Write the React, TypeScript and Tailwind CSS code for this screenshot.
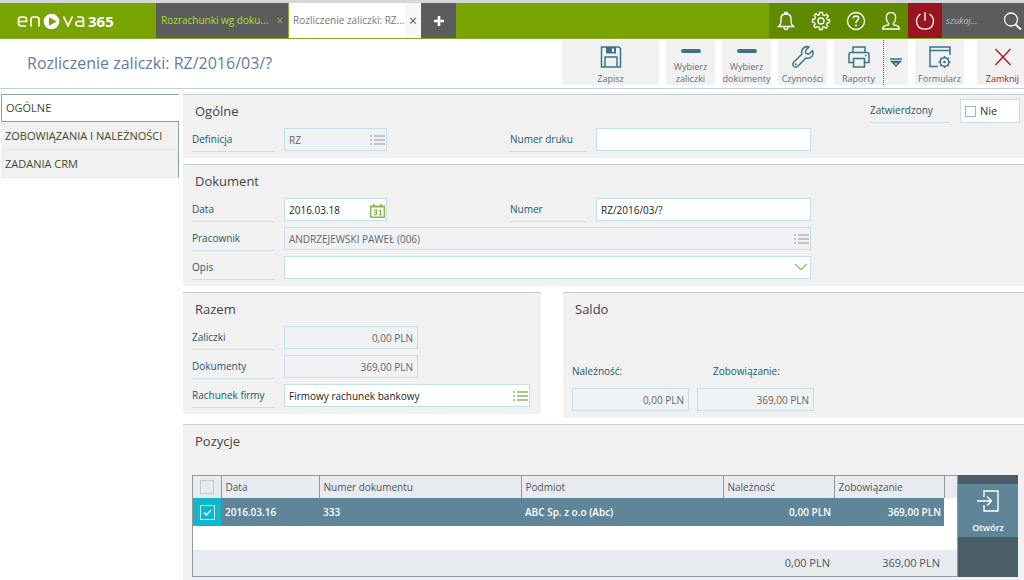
import React, { useState } from "react";

const INPUT_BASE =
  "block h-[23px] w-full min-w-0 border px-1 text-[10px] leading-4 outline-none";

function ListIcon({ className }: { className: string }) {
  return (
    <svg viewBox="0 0 15 11" className={`h-[11px] w-[15px] ${className}`} fill="currentColor" aria-hidden="true">
      <path d="M0 0h2v2H0zM4 0h11v2H4zM0 4h2v2H0zM4 4h11v2H4zM0 8h2v2H0zM4 8h11v2H4z" />
    </svg>
  );
}

function CalendarIcon() {
  return (
    <svg viewBox="0 0 15 14" className="h-[14px] w-[15px] text-[#8ab454]" aria-hidden="true">
      <path d="M.7 2.2h13.6v11H.7z" fill="none" stroke="currentColor" strokeWidth="1.400" />
      <path d="M.5 2h14v1.600H.5zM3 0h1.600v2.500H3zM10.400 0h1.600v2.500h-1.600z" fill="currentColor" />
      <path
        d="M3.800 6.200H6.500V10.600H3.800M4.500 8.300H6.500M9 7L10.500 6.200V10.600M9 10.600H12"
        fill="none"
        stroke="currentColor"
        strokeWidth="1.200"
      />
    </svg>
  );
}

function FieldLabel({ id, children }: { id: string; children: React.ReactNode }) {
  return (
    <label
      htmlFor={id}
      className="block h-6 truncate border-b border-[#c5dde6] text-[10px] leading-[22px] text-[#245a62]"
    >
      {children}
    </label>
  );
}

type FieldProps = {
  id: string;
  value?: string;
  locked?: boolean;
  right?: boolean;
  icon?: React.ReactNode;
  iconLabel?: string;
};

function Field({ id, value = "", locked, right, icon, iconLabel }: FieldProps) {
  return (
    <div className="relative min-w-0">
      <input
        id={id}
        type="text"
        defaultValue={value}
        readOnly={locked}
        className={`${INPUT_BASE} border-[#c3dfe8] ${
          locked ? "bg-[#eff1f3] text-[#666]" : "bg-white text-[#222]"
        } ${right ? "text-right" : ""}`}
      />
      {icon && (
        <button
          type="button"
          aria-label={iconLabel}
          className="absolute top-px right-0 flex h-[23px] w-5 items-center justify-center"
        >
          {icon}
        </button>
      )}
    </div>
  );
}

function Section({
  title,
  className = "",
  children,
}: {
  title: string;
  className?: string;
  children: React.ReactNode;
}) {
  return (
    <section className={`border-t border-[#c3d0d7] bg-[#f1f1f1] px-[9px] pb-[7px] ${className}`}>
      <h2 className="h-[33px] pl-[3px] text-[13px] leading-[33px] text-[#444]">{title}</h2>
      {children}
    </section>
  );
}

function ToolButton({
  label,
  icon,
  className = "w-[49px]",
}: {
  label: string;
  icon: React.ReactNode;
  className?: string;
}) {
  return (
    <button
      type="button"
      className={`flex h-[45px] shrink-0 flex-col items-center bg-[#f1f1f1] text-[9px] leading-3 text-[#5f6f86] ${className}`}
    >
      <span className="flex flex-1 items-center text-[#3b7489]">{icon}</span>
      <span>{label}</span>
    </button>
  );
}

const dash = <span className="h-1 w-5 rounded-sm bg-[#3b7489]" />;

function TopBar() {
  const icon = "h-[22px] w-[22px] text-white";
  const stroke = { fill: "none", stroke: "currentColor", strokeWidth: 1.3 };
  return (
    <header className="flex h-[39px] border-t-[3px] border-t-[#d6d7d9] border-b border-b-[#86ab2b] bg-[#78a300]">
      <a href="#" aria-label="enova365" className="flex w-[156px] shrink-0 items-center pl-[17px]">
        <svg viewBox="0 0 100 22" className="h-[22px] w-[100px]" aria-hidden="true">
          <g fill="none" stroke="#fff" strokeWidth="1.700">
            <path d="M2 11.500H9.500V9.500Q9.500 7 7 7H4Q1.500 7 1.500 9.500V13Q1.500 16 4 16H9M14 16.500V9.500Q14 7 16.500 7H19.500Q22 7 22 9.500V16.500M46.500 6.500L51 15.700L55.500 6.500M60 7H64Q66.500 7 66.500 9.500V16H61.500Q59 16 59 13.600Q59 11.400 61.500 11.400H66" />
          </g>
          <circle cx="34.500" cy="11.500" r="7.800" fill="#fff" />
          <path d="M32 7.300L39.500 11.500L32 15.700Z" fill="#78a300" />
          <text
            x="71"
            y="16.500"
            fill="#fff"
            fontFamily="Open Sans, sans-serif"
            fontWeight="700"
            fontSize="15"
          >
            365
          </text>
        </svg>
      </a>
      <nav className="flex min-w-0" aria-label="Karty">
        <div className="flex w-[132px] items-center bg-[#5c5c5c] pl-[5px]">
          <a href="#" className="min-w-0 flex-1 truncate text-[10px] text-[#a5e32c]">
            Rozrachunki wg doku...
          </a>
          <button type="button" aria-label="Zamknij kartę" className="w-4 text-[12px] text-[#8cbf33]">
            ×
          </button>
        </div>
        <div className="flex w-[133px] items-center border-l border-[#86ab2b] bg-white pl-1">
          <a href="#" className="min-w-0 flex-1 truncate text-[10px] text-[#777]">
            Rozliczenie zaliczki: RZ...
          </a>
          <button type="button" aria-label="Zamknij kartę" className="h-full w-4 bg-[#f7f7f7] text-[14px] text-[#555]">
            ×
          </button>
        </div>
        <button type="button" aria-label="Nowa karta" className="flex w-[35px] items-center justify-center bg-[#5c5c5c]">
          <svg viewBox="0 0 10 10" className="h-[10px] w-[10px]">
            <path d="M5 0V10M0 5H10" stroke="#fff" strokeWidth="2.600" />
          </svg>
        </button>
      </nav>
      <div className="ml-auto flex shrink-0">
        <div className="flex w-[139px] items-center justify-around bg-[#5f8a00]">
          <button type="button" aria-label="Powiadomienia">
            <svg viewBox="0 0 22 22" className={icon}>
              <path {...stroke} d="M3.500 16.500H18.500Q16 14.500 16 11.500V8.500Q16 4 11 4Q6 4 6 8.500V11.500Q6 14.500 3.500 16.500ZM9 17Q9 19.500 11 19.500Q13 19.500 13 17M10 4V2.500H12V4" />
            </svg>
          </button>
          <button type="button" aria-label="Ustawienia">
            <svg viewBox="0 0 22 22" className={icon}>
              <circle {...stroke} cx="11" cy="11" r="3" />
              <path {...stroke} strokeLinejoin="round" d="M9.500 2.500H12.500L13 5L14.500 5.600L16.600 4.200L18.300 6.100L16.700 8L17.300 9.500L19.500 10V12.500L17.200 13L16.500 14.500L17.800 16.500L15.900 18.200L14 16.700L12.700 17.200L12.200 19.500H9.500L9 17.100L7.500 16.500L5.500 17.800L3.700 15.900L5.100 14L4.600 12.600L2.500 12.100V9.500L4.800 9L5.500 7.500L4.200 5.500L6.100 3.700L8 5.300L9.200 4.800Z" />
            </svg>
          </button>
          <button type="button" aria-label="Pomoc">
            <svg viewBox="0 0 22 22" className={icon}>
              <circle {...stroke} cx="11" cy="11" r="8.500" />
              <path {...stroke} strokeWidth={1.500} d="M8.300 8.500Q8.400 6 11 6Q13.600 6 13.600 8.200Q13.600 9.500 12.200 10.400Q11 11.200 11 13M11 14.500V16.200" />
            </svg>
          </button>
          <button type="button" aria-label="Użytkownik">
            <svg viewBox="0 0 22 22" className={icon}>
              <path {...stroke} strokeLinejoin="round" d="M8.600 13.500Q6.300 11 6.300 7.500Q6.500 2.700 11 2.700Q15.500 2.700 15.700 7.500Q15.700 11 13.400 13.500V14.800Q19.500 15.500 19.500 19H2.500Q2.500 15.500 8.600 14.800Z" />
            </svg>
          </button>
        </div>
        <button type="button" aria-label="Wyloguj" className="flex w-[34px] items-center justify-center bg-[#9a1420]">
          <svg viewBox="0 0 22 22" className={icon}>
            <path {...stroke} d="M6.500 4Q2.500 6.800 2.500 11Q2.800 19 11 19.200Q19.200 19 19.500 11Q19.500 6.800 15.500 4M11 2V11" />
          </svg>
        </button>
        <div className="flex w-[82px] items-center bg-[#5c5c5c] pl-1">
          <input
            type="search"
            aria-label="Szukaj"
            placeholder="szukaj..."
            className="w-[55px] bg-transparent text-[9px] italic text-white outline-none placeholder:text-[#bdbdbd]"
          />
          <button type="button" aria-label="Szukaj">
            <svg viewBox="0 0 22 22" className={icon}>
              <circle {...stroke} cx="10" cy="9.500" r="6.500" />
              <path {...stroke} strokeWidth={1.800} d="M14.500 14.500L20 19.500" />
            </svg>
          </button>
        </div>
      </div>
    </header>
  );
}

function Toolbar() {
  const s = { fill: "none", stroke: "currentColor", strokeWidth: 1.5 };
  return (
    <div className="flex h-[50px] items-start border-b border-[#c3d0d7] bg-white pt-px">
      <h1 className="min-w-0 flex-1 truncate pl-[27px] text-[16px] leading-[46px] text-[#657b9c]">
        Rozliczenie zaliczki: RZ/2016/03/?
      </h1>
      <div className="flex shrink-0 gap-[7px]">
        <ToolButton
          label="Zapisz"
          className="w-[97px]"
          icon={
            <svg viewBox="0 0 22 22" className="h-[22px] w-[22px]">
              <path {...s} d="M1.500 1H19L20.500 2.500V21H1.500ZM5 21V11H17V21" />
              <path d="M6 1H16V7.500H6Z" fill="currentColor" />
              <path d="M12 2.500H14V6H12Z" fill="#f1f1f1" />
            </svg>
          }
        />
        <ToolButton label="Wybierz zaliczki" icon={dash} />
        <ToolButton label="Wybierz dokumenty" icon={dash} />
        <ToolButton
          label="Czynności"
          icon={
            <svg viewBox="0 0 24 24" className="h-6 w-6">
              <path {...s} strokeLinejoin="round" d="M21.500 5.500L18 9L15 8.500L14.500 5.500L18 2Q14.500.800 12 3.500Q10 6 11 9L2.500 17.500Q1 19.500 2.700 21.300Q4.500 23 6.500 21.500L15 13Q18.500 14 20.800 11.500Q23 9 21.500 5.500Z" />
              <circle cx="4.800" cy="19.300" r="1" fill="currentColor" />
            </svg>
          }
        />
        <div className="flex">
          <ToolButton
            label="Raporty"
            icon={
              <svg viewBox="0 0 22 22" className="h-[22px] w-[22px]">
                <path {...s} d="M5 6.500V1H17V6.500M5 16.500H1V8.500Q1 6.500 3 6.500H19Q21 6.500 21 8.500V16.500H17M5.500 12.500H16.500V21H5.500ZM17 9.500H18.500" />
              </svg>
            }
          />
          <button
            type="button"
            aria-label="Więcej raportów"
            className="flex w-[25px] items-center justify-center border-l border-dotted border-[#4b6170] bg-[#f1f1f1] text-[#3b7489]"
          >
            <svg viewBox="0 0 12 10" className="h-[10px] w-3">
              <path d="M0 1H12M1.500 3.500H10.500L6 8Z" fill="none" stroke="currentColor" strokeWidth="1.500" />
              <path d="M2 3.500H10L8.500 5.500H3.500Z" fill="currentColor" />
            </svg>
          </button>
        </div>
        <ToolButton
          label="Formularz"
          icon={
            <svg viewBox="0 0 22 22" className="h-[22px] w-[22px]">
              <path {...s} d="M9 20.500H1V1H21V9M1 4.500H21" />
              <circle {...s} cx="15.500" cy="16" r="4.300" />
              <circle cx="15.500" cy="16" r="1.300" fill="currentColor" />
              <path {...s} d="M15.500 10V12M15.500 20V22M9.500 16H11.500M19.500 16H21.500M11.300 11.800L12.600 13.100M18.400 18.900L19.700 20.200M11.300 20.200L12.600 18.900M18.400 13.100L19.700 11.800" />
            </svg>
          }
        />
        <button
          type="button"
          className="ml-[6px] flex h-[45px] w-[47px] flex-col items-center bg-[#f1f1f1] pl-1 text-[9px] leading-3 text-[#a8202c]"
        >
          <span className="flex flex-1 items-center">
            <svg viewBox="0 0 18 18" className="h-[18px] w-[18px]">
              <path {...s} d="M1.500 1L16.500 17M16.500 1L1.500 17" />
            </svg>
          </span>
          <span>Zamknij</span>
        </button>
      </div>
    </div>
  );
}

const sideItems = ["OGÓLNE", "ZOBOWIĄZANIA I NALEŻNOŚCI", "ZADANIA CRM"];

function Sidebar() {
  return (
    <nav className="w-[179px] shrink-0 pl-px text-[11px] text-[#3f4a2c]" aria-label="Sekcje">
      {sideItems.map((item, i) => (
        <a
          key={item}
          href="#"
          className={
            i === 0
              ? "block truncate border border-r-0 border-[#8b9cab] bg-white pl-1 leading-[26px]"
              : "block truncate border-r border-b border-r-[#8b9cab] border-b-[#e6e8ea] bg-[#f1f1f1] pl-1 leading-[27px]"
          }
        >
          {item}
        </a>
      ))}
    </nav>
  );
}

const headCell = "border-r border-[#8f979f] px-1 text-left font-normal";

function Positions() {
  const [checked, setChecked] = useState(true);
  return (
    <div className="mt-[17px] flex">
      <div className="min-w-0 flex-1 border border-[#8f979f] bg-white">
        <table className="w-full table-fixed border-collapse text-[10px] leading-4 text-[#50555c]">
          <colgroup>
            <col className="w-[28px]" />
            <col className="w-[98px]" />
            <col />
            <col />
            <col className="w-[111px]" />
            <col className="w-[110px]" />
            <col className="w-[13px]" />
          </colgroup>
          <thead className="bg-[#e7eaee]">
            <tr className="h-[22px]">
              <th className="border-r border-[#8f979f]">
                <input
                  type="checkbox"
                  aria-label="Zaznacz wszystkie"
                  className="mx-auto block h-[14px] w-[14px] appearance-none border border-[#c4c8cd]"
                />
              </th>
              <th className={headCell}>Data</th>
              <th className={headCell}>Numer dokumentu</th>
              <th className={headCell}>Podmiot</th>
              <th className={headCell}>Należność</th>
              <th className={headCell}>Zobowiązanie</th>
              <td />
            </tr>
          </thead>
          <tbody>
            <tr className="h-7 font-semibold text-white">
              <td className="bg-[#10b7cb]">
                <label className="relative mx-auto block h-[15px] w-[15px]">
                  <input
                    type="checkbox"
                    aria-label="Zaznacz pozycję 333"
                    checked={checked}
                    onChange={() => setChecked(!checked)}
                    className="block h-[15px] w-[15px] appearance-none border border-[#c9eef3]"
                  />
                  {checked && (
                    <svg viewBox="0 0 15 15" className="absolute inset-0 h-[15px] w-[15px]" aria-hidden="true">
                      <path d="M4 7.500L6.500 10L11 5" fill="none" stroke="#b9e6ec" strokeWidth="1.800" />
                    </svg>
                  )}
                </label>
              </td>
              <td className="bg-[#5f8598] px-1">2016.03.16</td>
              <td className="bg-[#5f8598] px-1">333</td>
              <td className="bg-[#5f8598] px-1">ABC Sp. z o.o (Abc)</td>
              <td className="bg-[#5f8598] px-[3px] text-right">0,00 PLN</td>
              <td className="bg-[#5f8598] px-[3px] text-right">369,00 PLN</td>
              <td />
            </tr>
            <tr className="h-6">
              <td colSpan={7} />
            </tr>
          </tbody>
          <tfoot className="bg-[#e7eaee] text-[11px]">
            <tr className="h-[26px]">
              <td colSpan={4} />
              <td className="px-1 text-right">0,00 PLN</td>
              <td className="px-1 text-right">369,00 PLN</td>
              <td />
            </tr>
          </tfoot>
        </table>
      </div>
      <div className="mr-[-3px] w-[60px] shrink-0 bg-[#4b5d66] pt-[9px]">
        <button
          type="button"
          className="flex h-[53px] w-full flex-col items-center justify-between bg-[#5f8598] pt-[6px] pb-[3px] text-[9px] leading-3 font-semibold text-white"
        >
          <svg viewBox="0 0 22 22" className="h-[22px] w-[22px]" aria-hidden="true">
            <path d="M7 7V1H21V21H7V15M0 11H14M10 6.500L14.500 11L10 15.500" fill="none" stroke="#fff" strokeWidth="1.400" />
          </svg>
          Otwórz
        </button>
      </div>
    </div>
  );
}

export default function App() {
  const pairGrid =
    "grid h-[23px] w-[619px] max-w-full grid-cols-[82px_103px_minmax(0,1fr)_76px_215px] gap-x-[10px]";
  const wideGrid = "grid h-[23px] grid-cols-[82px_minmax(0,1fr)] gap-x-[10px]";
  return (
    <div className="min-h-screen bg-white font-['Open_Sans','Noto_Sans',sans-serif]">
      <TopBar />
      <Toolbar />
      <div className="flex items-start gap-1 pt-[5px]">
        <Sidebar />
        <main className="flex min-w-0 flex-1 flex-col gap-[6px]">
          <Section title="Ogólne">
            <div className="flex h-[23px] justify-between">
              <div className={pairGrid}>
                <FieldLabel id="definicja">Definicja</FieldLabel>
                <Field
                  id="definicja"
                  value="RZ"
                  locked
                  icon={<ListIcon className="text-[#c4c4c4]" />}
                  iconLabel="Wybierz definicję"
                />
                <span />
                <FieldLabel id="druk">Numer druku</FieldLabel>
                <Field id="druk" />
              </div>
              <div className="-mt-[29px] -mr-[5px] flex h-6 shrink-0 gap-[10px]">
                <span className="w-20">
                  <FieldLabel id="zatw">Zatwierdzony</FieldLabel>
                </span>
                <label className="flex h-6 w-[60px] items-center gap-1 border border-[#c3dfe8] bg-white pl-1 text-[11px] text-[#333]">
                  <input
                    id="zatw"
                    type="checkbox"
                    className="h-[11px] w-[11px] appearance-none border border-[#a9b3bd] checked:bg-[#10b7cb]"
                  />
                  Nie
                </label>
              </div>
            </div>
          </Section>

          <Section title="Dokument">
            <div className="flex max-w-[619px] flex-col gap-[6px]">
              <div className={pairGrid}>
                <FieldLabel id="data">Data</FieldLabel>
                <Field id="data" value="2016.03.18" icon={<CalendarIcon />} iconLabel="Wybierz datę" />
                <span />
                <FieldLabel id="numer">Numer</FieldLabel>
                <Field id="numer" value="RZ/2016/03/?" />
              </div>
              <div className={wideGrid}>
                <FieldLabel id="pracownik">Pracownik</FieldLabel>
                <Field
                  id="pracownik"
                  value="ANDRZEJEWSKI PAWEŁ (006)"
                  locked
                  icon={<ListIcon className="text-[#c4c4c4]" />}
                  iconLabel="Wybierz pracownika"
                />
              </div>
              <div className={wideGrid}>
                <FieldLabel id="opis">Opis</FieldLabel>
                <div className="relative">
                  <select id="opis" className={`${INPUT_BASE} appearance-none border-[#c3dfe8] bg-white`}>
                    <option value="" />
                  </select>
                  <svg
                    viewBox="0 0 14 8"
                    className="pointer-events-none absolute top-[7px] right-[3px] h-2 w-[14px]"
                    aria-hidden="true"
                  >
                    <path d="M1 1L7 6.500L13 1" fill="none" stroke="#9cc07a" strokeWidth="1.500" />
                  </svg>
                </div>
              </div>
            </div>
          </Section>

          <div className="flex items-start gap-[22px]">
            <Section title="Razem" className="w-[358px] shrink-0">
              <div className="flex max-w-[338px] flex-col gap-[6px]">
                <div className="grid h-[23px] grid-cols-[82px_134px] gap-x-[10px]">
                  <FieldLabel id="zaliczki">Zaliczki</FieldLabel>
                  <Field id="zaliczki" value="0,00 PLN" locked right />
                </div>
                <div className="grid h-[23px] grid-cols-[82px_134px] gap-x-[10px]">
                  <FieldLabel id="dokumenty">Dokumenty</FieldLabel>
                  <Field id="dokumenty" value="369,00 PLN" locked right />
                </div>
                <div className={wideGrid}>
                  <FieldLabel id="rachunek">Rachunek firmy</FieldLabel>
                  <Field
                    id="rachunek"
                    value="Firmowy rachunek bankowy"
                    icon={<ListIcon className="text-[#a3c983]" />}
                    iconLabel="Wybierz rachunek"
                  />
                </div>
              </div>
            </Section>
            <Section title="Saldo" className="min-w-0 flex-1">
              <div className="grid grid-cols-[117px_117px] gap-x-2 gap-y-[9px] pt-[37px] text-[10px] leading-4 text-[#245a62]">
                <label htmlFor="naleznosc">Należność:</label>
                <label htmlFor="zobowiazanie" className="pl-4">
                  Zobowiązanie:
                </label>
                <Field id="naleznosc" value="0,00 PLN" locked right />
                <Field id="zobowiazanie" value="369,00 PLN" locked right />
              </div>
            </Section>
          </div>

          <Section title="Pozycje">
            <Positions />
          </Section>
        </main>
      </div>
    </div>
  );
}
